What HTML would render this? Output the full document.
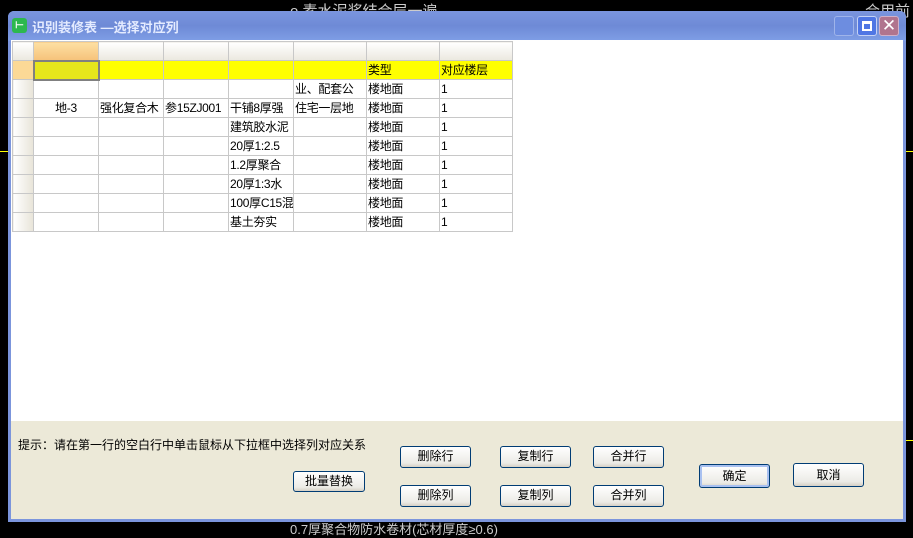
<!DOCTYPE html>
<html><head><meta charset="utf-8"><style>
*{margin:0;padding:0;box-sizing:border-box}
body{width:913px;height:532px;background:#000;position:relative;overflow:hidden;font-family:"Liberation Sans","WenQuanYi Zen Hei","Noto Sans CJK SC",sans-serif;font-size:12px}
.abs{position:absolute}
.dlg{left:8px;top:11px;width:898px;height:511px;background:#7b95dc;border-radius:6px 6px 0 0}
.title{left:8px;top:11px;width:898px;height:30px;border-radius:6px 6px 0 0;background:linear-gradient(#7a95de,#6e8ad6 50%,#7f9ee6)}
.client{left:11px;top:40px;width:892px;height:381px;background:#fff}
.gray{left:11px;top:421px;width:892px;height:98px;background:#ece9d8}
table{position:absolute;left:12px;top:41px;border-collapse:collapse;table-layout:fixed;width:500px}
td{border:1px solid #c8c8c8;height:19px;padding:0 1px;font-size:12px;white-space:nowrap;overflow:hidden;line-height:17px;letter-spacing:-0.3px}
tr.h td{background:linear-gradient(#fff,#ebe8df)}
td.rh{background:linear-gradient(90deg,#fff,#e8e4d8)}
tr.y td{background:#ffff00}
.btn{position:absolute;background:linear-gradient(#fff,#ecebe6 80%,#d6d0c5);border:1px solid #003c74;border-radius:3px;text-align:center;font-size:12px;line-height:19px}
</style></head><body>
<div class="abs" style="left:290px;top:0;color:#ccc;font-size:15px">ǫ 素水泥浆结合层一遍</div>
<div class="abs" style="left:865px;top:0;color:#ccc;font-size:15px">合用前</div>
<div class="abs" style="left:290px;top:519px;color:#ccc;font-size:13px">0.7厚聚合物防水卷材(芯材厚度≥0.6)</div>
<div class="abs" style="left:0;top:151px;width:8px;height:1px;background:#ff0"></div>
<div class="abs" style="left:906px;top:151px;width:7px;height:1px;background:#ff0"></div>
<div class="abs" style="left:906px;top:440px;width:7px;height:1px;background:#ff0"></div>
<div class="abs dlg"></div>
<div class="abs title"></div>
<div class="abs" style="left:12px;top:18px;width:15px;height:15px;background:#2db84f;border-radius:3px;color:#fff;font-size:10px;line-height:15px;text-align:center;font-weight:bold">⊢</div>
<div class="abs" style="left:32px;top:17px;color:#e4ebff;font-size:13px;font-weight:bold">识别装修表 —选择对应列</div>
<div class="abs" style="left:834px;top:16px;width:20px;height:20px;background:#6d8de0;border:1px solid #9fb4ea;border-radius:3px"></div>
<div class="abs" style="left:857px;top:16px;width:20px;height:20px;background:#4f76e4;border:1px solid #c4d2f5;border-radius:3px"><div style="position:absolute;left:4px;top:4px;width:10px;height:10px;border:2px solid #fff;border-top-width:3px"></div></div>
<div class="abs" style="left:879px;top:16px;width:20px;height:20px;background:#b0748e;border:1px solid #d0b0c8;border-radius:3px;color:#fff;font-size:17px;line-height:18px;text-align:center">✕</div>
<div class="abs client"></div>
<div class="abs gray"></div>
<table>
<colgroup><col style="width:21px"><col style="width:65px"><col style="width:65px"><col style="width:65px"><col style="width:65px"><col style="width:73px"><col style="width:73px"><col style="width:73px"></colgroup>
<tr class="h"><td></td><td style="background:linear-gradient(#fde0a4,#f6c27a)"></td><td></td><td></td><td></td><td></td><td></td><td></td></tr>
<tr class="y"><td style="background:#fcd996"></td><td style="background:#e6e61c;border:2px solid #808080"></td><td></td><td></td><td></td><td></td><td>类型</td><td>对应楼层</td></tr>
<tr><td class="rh"></td><td></td><td></td><td></td><td></td><td>业、配套公</td><td>楼地面</td><td>1</td></tr>
<tr><td class="rh"></td><td style="text-align:center">地-3</td><td>强化复合木</td><td>参15ZJ001</td><td>干铺8厚强</td><td>住宅一层地</td><td>楼地面</td><td>1</td></tr>
<tr><td class="rh"></td><td></td><td></td><td></td><td>建筑胶水泥</td><td></td><td>楼地面</td><td>1</td></tr>
<tr><td class="rh"></td><td></td><td></td><td></td><td>20厚1:2.5</td><td></td><td>楼地面</td><td>1</td></tr>
<tr><td class="rh"></td><td></td><td></td><td></td><td>1.2厚聚合</td><td></td><td>楼地面</td><td>1</td></tr>
<tr><td class="rh"></td><td></td><td></td><td></td><td>20厚1:3水</td><td></td><td>楼地面</td><td>1</td></tr>
<tr><td class="rh"></td><td></td><td></td><td></td><td>100厚C15混</td><td></td><td>楼地面</td><td>1</td></tr>
<tr><td class="rh"></td><td></td><td></td><td></td><td>基土夯实</td><td></td><td>楼地面</td><td>1</td></tr>
</table>
<div class="abs" style="left:18px;top:436px;font-size:12px">提示：请在第一行的空白行中单击鼠标从下拉框中选择列对应关系</div>
<div class="btn" style="left:293px;top:471px;width:72px;height:21px">批量替换</div>
<div class="btn" style="left:400px;top:446px;width:71px;height:22px">删除行</div>
<div class="btn" style="left:500px;top:446px;width:71px;height:22px">复制行</div>
<div class="btn" style="left:593px;top:446px;width:71px;height:22px">合并行</div>
<div class="btn" style="left:400px;top:485px;width:71px;height:22px">删除列</div>
<div class="btn" style="left:500px;top:485px;width:71px;height:22px">复制列</div>
<div class="btn" style="left:593px;top:485px;width:71px;height:22px">合并列</div>
<div class="btn" style="left:699px;top:464px;width:71px;height:24px;box-shadow:inset 0 0 0 2px #a8c0f0;line-height:22px">确定</div>
<div class="btn" style="left:793px;top:463px;width:71px;height:24px;line-height:22px">取消</div>
</body></html>
